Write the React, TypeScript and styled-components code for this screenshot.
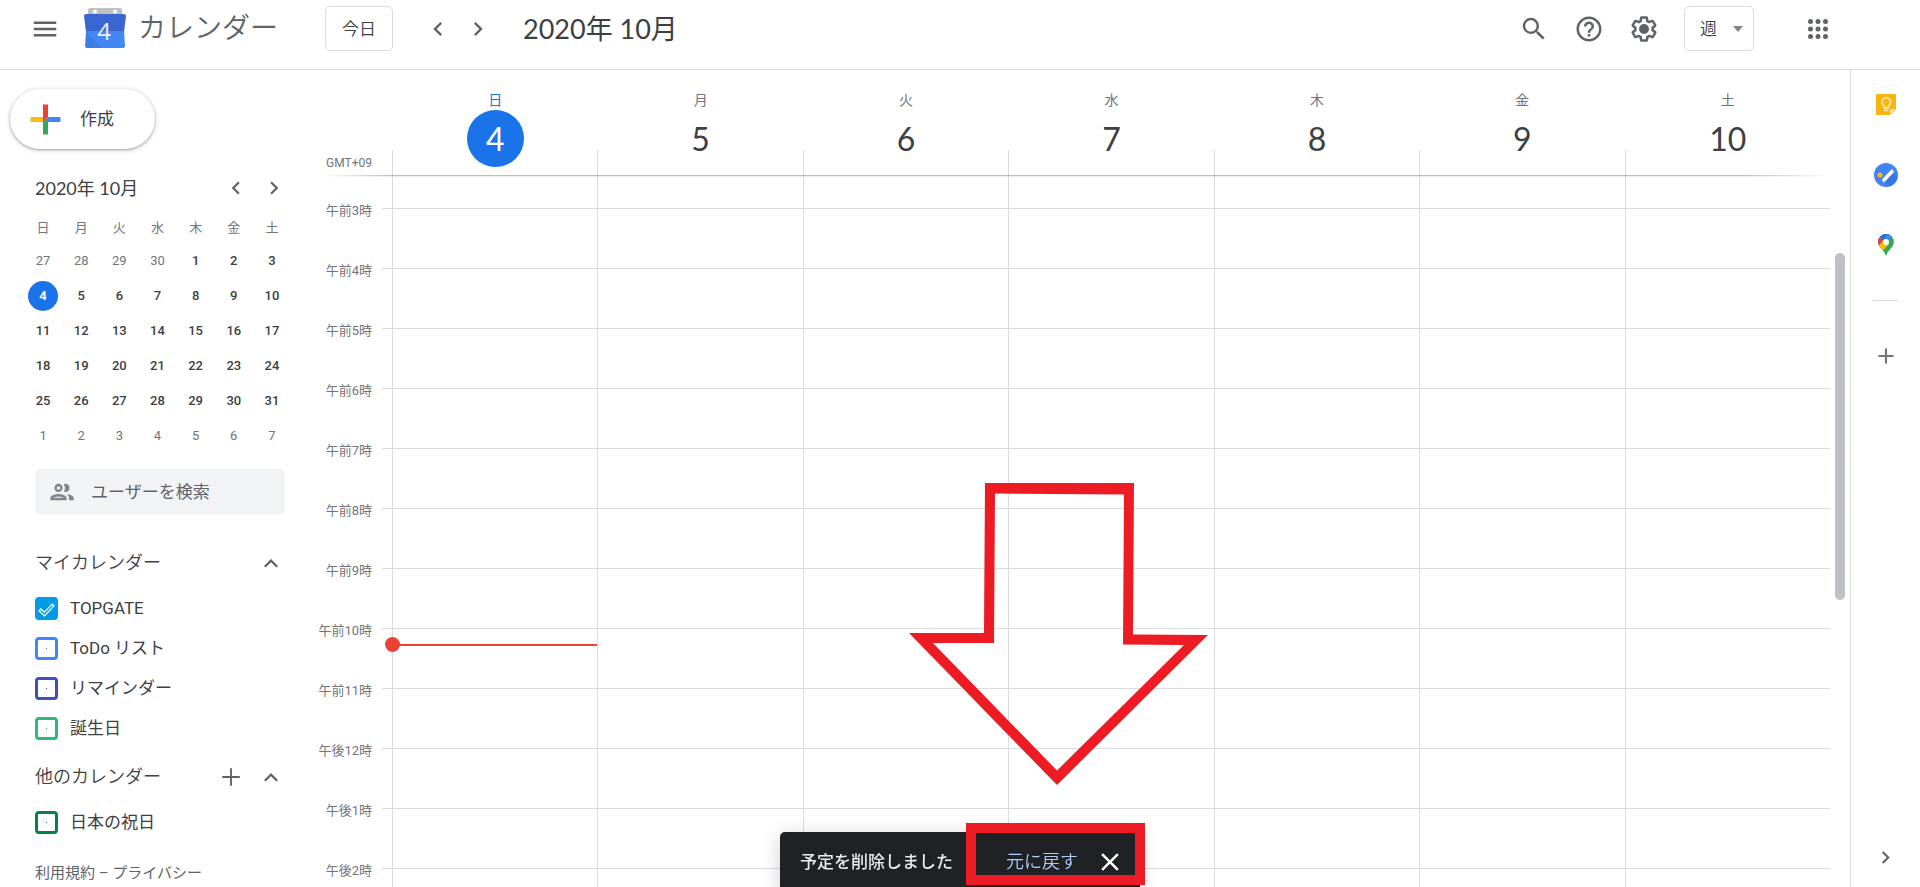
import React from "react";
import styled, { createGlobalStyle, css } from "styled-components";

const SANS = `Roboto, "Noto Sans CJK JP", sans-serif`;
const DISPLAY = `Lato, "Noto Sans CJK JP", sans-serif`;

const ink = "#3c4043";
const muted = "#70757a";
const iconGray = "#5f6368";
const line = "#dadce0";
const blue = "#1a73e8";
const markRed = "#ed1c24";

const GlobalStyle = createGlobalStyle`
  * { box-sizing: border-box; }
  body {
    margin: 0;
    background: #fff;
    color: ${ink};
    font-family: ${SANS};
    line-height: 20px;
    overflow: hidden;
  }
  button, input, select { font: inherit; color: inherit; }
  button { background: none; border: 0; padding: 0; cursor: pointer; }
  svg { display: block; }
`;

const Page = styled.div`
  display: flex;
  flex-direction: column;
  height: 100vh;
`;

/* ---------- Top bar ---------- */

const TopBar = styled.header`
  display: flex;
  flex: none;
  align-items: flex-start;
  height: 70px;
  padding: 6px 82px 0 0;
  border-bottom: 1px solid ${line};
`;

const Brand = styled.div`
  display: flex;
  align-items: center;
  width: 325px;
  height: 45px;
  padding-left: 25px;
`;

const LogoMark = styled.span`
  flex: none;
  margin: 0 11px 0 18px;
`;

const AppName = styled.span`
  font-size: 28px;
  font-weight: 350;
  line-height: 40px;
  color: ${iconGray};
  white-space: nowrap;
`;

const IconButton = styled.button<{ $size?: number }>`
  display: flex;
  align-items: center;
  justify-content: center;
  flex: none;
  width: ${(p) => p.$size ?? 40}px;
  height: ${(p) => p.$size ?? 40}px;
  color: ${iconGray};
`;

const outlined = css`
  height: 45px;
  border: 1px solid ${line};
  border-radius: 5px;
  background: #fff;
  font-size: 17px;
  font-weight: 350;
`;

const TodayButton = styled.button`
  ${outlined}
  width: 68px;
`;

const PagerGroup = styled.div`
  display: flex;
  align-items: center;
  height: 45px;
  margin: 0 25px;
`;

const MonthTitle = styled.h1`
  margin: 0;
  font-family: ${DISPLAY};
  font-size: 27px;
  font-weight: 400;
  line-height: 45px;
  white-space: nowrap;
`;

const Tools = styled.div`
  display: flex;
  align-items: center;
  gap: 15px;
  height: 45px;
  margin-left: auto;
`;

const ViewPicker = styled.label`
  position: relative;
  display: block;
  margin: 0 29px 0 5px;
`;

const ViewSelect = styled.select`
  ${outlined}
  display: block;
  appearance: none;
  width: 70px;
  padding: 0 0 0 15px;
`;

const SelectArrow = styled.svg`
  position: absolute;
  right: 11px;
  top: 20px;
  pointer-events: none;
`;

/* ---------- Sidebar ---------- */

const Columns = styled.div`
  display: flex;
  flex: 1;
  min-height: 0;
`;

const Sidebar = styled.aside`
  flex: none;
  width: 316px;
  padding-top: 19px;
`;

const CreateButton = styled.button`
  display: flex;
  align-items: center;
  gap: 12px;
  width: 145px;
  height: 60px;
  margin-left: 10px;
  padding-left: 13px;
  border-radius: 30px;
  font-size: 17px;
  box-shadow: 0 1px 2px rgba(60, 64, 67, 0.35), 0 1px 4px 1px rgba(60, 64, 67, 0.18);
`;

const MiniHead = styled.div`
  display: flex;
  align-items: center;
  height: 30px;
  margin: 24px 23px 10px 35px;
`;

const MiniTitle = styled.h2`
  flex: 1;
  margin: 0;
  font-family: ${DISPLAY};
  font-size: 18px;
  font-weight: 400;
  white-space: nowrap;
`;

const MiniTable = styled.table`
  width: 267px;
  margin-left: 24px;
  border-collapse: collapse;
  table-layout: fixed;
  font-size: 13px;
  text-align: center;
`;

const MiniWeekday = styled.th`
  height: 30px;
  padding: 0;
  font-weight: 400;
  color: ${muted};
`;

const MiniCell = styled.td`
  height: 35px;
  padding: 0;
`;

const MiniDay = styled.button<{ $outside?: boolean; $today?: boolean }>`
  width: 30px;
  height: 30px;
  border-radius: 50%;
  font-weight: ${(p) => (p.$today ? 700 : p.$outside ? 400 : 500)};
  color: ${(p) => (p.$today ? "#fff" : p.$outside ? muted : ink)};
  background: ${(p) => (p.$today ? blue : "transparent")};
`;

const PeopleSearch = styled.label`
  display: flex;
  align-items: center;
  gap: 15px;
  width: 250px;
  height: 45px;
  margin: 16px 0 29px 35px;
  padding-left: 13px;
  border-radius: 5px;
  background: #f1f3f4;
  color: #80868b;
`;

const PeopleInput = styled.input`
  flex: 1;
  min-width: 0;
  padding: 0;
  border: 0;
  outline: 0;
  background: none;
  font-size: 17px;
  color: ${ink};
  &::placeholder {
    color: ${iconGray};
    opacity: 1;
  }
`;

const SectionHead = styled.div`
  display: flex;
  align-items: center;
  height: 40px;
  margin: 0 25px 5px 35px;
`;

const SectionTitle = styled.h2`
  flex: 1;
  margin: 0;
  font-size: 18px;
  font-weight: 350;
`;

const CalendarList = styled.ul`
  margin: 0 0 9px;
  padding: 0 0 0 35px;
  list-style: none;
`;

const CalendarItem = styled.label`
  display: flex;
  align-items: center;
  gap: 12px;
  height: 40px;
  font-size: 17px;
`;

const TickWrap = styled.span`
  display: grid;
  place-items: center;
  > * { grid-area: 1 / 1; }
  svg { pointer-events: none; }
`;

const TickBox = styled.input<{ $color: string }>`
  appearance: none;
  width: 23px;
  height: 23px;
  margin: 0;
  border: 3px solid ${(p) => p.$color};
  border-radius: 4px;
  background: linear-gradient(${(p) => p.$color}, ${(p) => p.$color}) center / 1px 1px no-repeat;
  &:checked { background: ${(p) => p.$color}; }
`;

const FootLinks = styled.footer`
  margin: 21px 0 0 35px;
  font-size: 15px;
  color: ${iconGray};
`;

const FootLink = styled.a`
  color: inherit;
  text-decoration: none;
`;

/* ---------- Week view ---------- */

const Week = styled.main`
  display: flex;
  flex-direction: column;
  flex: 1;
  min-width: 0;
`;

const DayHeads = styled.div`
  position: relative;
  display: grid;
  grid-template-columns: 76px repeat(7, 1fr);
  flex: none;
  height: 106px;
  margin-right: 20px;
  &::after {
    content: "";
    position: absolute;
    left: 6px;
    right: 0;
    bottom: -1px;
    height: 2px;
    background: linear-gradient(rgba(0, 0, 0, 0.26) 50%, rgba(0, 0, 0, 0.07) 50%);
    mask-image: linear-gradient(90deg, transparent, #000 70px, #000 calc(100% - 90px), transparent);
  }
`;

const Zone = styled.div`
  align-self: end;
  padding: 0 20px 3px 0;
  font-size: 12px;
  text-align: right;
  color: ${muted};
`;

const DayHead = styled.div<{ $today?: boolean }>`
  display: flex;
  flex-direction: column;
  align-items: center;
  padding: 20px 0 0 1px;
  font-size: 14px;
  color: ${(p) => (p.$today ? blue : muted)};
  background: linear-gradient(${line}, ${line}) left bottom / 1px 26px no-repeat;
`;

const DayNumber = styled.button<{ $today?: boolean }>`
  width: 57px;
  height: 57px;
  border-radius: 50%;
  font-family: ${DISPLAY};
  font-size: 32px;
  line-height: 57px;
  color: ${(p) => (p.$today ? "#fff" : ink)};
  background: ${(p) => (p.$today ? blue : "transparent")};
`;

const Scroller = styled.div`
  display: flex;
  flex: 1;
  min-height: 0;
  overflow: hidden;
`;

const Hours = styled.div`
  position: relative;
  flex: 1;
  min-width: 0;
`;

const HourRow = styled.div<{ $partial?: boolean }>`
  display: grid;
  grid-template-columns: 66px 10px repeat(7, 1fr);
  height: ${(p) => (p.$partial ? 32 : 60)}px;
  > * + * { border-top: ${(p) => (p.$partial ? "0" : `1px solid ${line}`)}; }
`;

const HourLabel = styled.span`
  margin-top: -7px;
  padding-right: 10px;
  font-size: 13px;
  text-align: right;
  color: ${muted};
`;

const Slot = styled.div`
  border-left: 1px solid ${line};
`;

const Overlay = styled.div`
  position: absolute;
  inset: 0 0 0 76px;
  pointer-events: none;
`;

const NowLine = styled.div`
  position: absolute;
  top: 468px;
  left: 0;
  width: calc(100% / 7);
  height: 2px;
  background: #ea4335;
  &::before {
    content: "";
    position: absolute;
    left: -7px;
    top: -7px;
    width: 15px;
    height: 15px;
    border-radius: 50%;
    background: #ea4335;
  }
`;

const Arrow = styled.svg`
  position: absolute;
  left: calc(36% - 1px);
  top: 307px;
`;

const Track = styled.div`
  flex: none;
  width: 10px;
  margin: 77px 5px 0;
`;

const Thumb = styled.div`
  height: 347px;
  border-radius: 5px;
  background: #bdc1c6;
`;

/* ---------- Side panel ---------- */

const Rail = styled.nav`
  display: flex;
  flex-direction: column;
  align-items: center;
  flex: none;
  width: 70px;
  padding-bottom: 10px;
  border-left: 1px solid ${line};
`;

const RailButton = styled.button`
  display: flex;
  align-items: center;
  justify-content: center;
  width: 69px;
  height: 70px;
  color: #757575;
`;

const RailRule = styled.hr`
  width: 25px;
  height: 1px;
  margin: 20px 0;
  border: 0;
  background: ${line};
`;

const RailToggle = styled(IconButton)`
  margin-top: auto;
`;

/* ---------- Snackbar ---------- */

const ToastLayer = styled.div`
  position: fixed;
  left: 0;
  right: 0;
  bottom: -5px;
  display: flex;
  justify-content: center;
  pointer-events: none;
`;

const Toast = styled.div`
  position: relative;
  display: flex;
  align-items: center;
  width: 360px;
  height: 60px;
  padding: 0 15px 0 20px;
  border-radius: 5px;
  background: #202124;
  box-shadow: 0 4px 20px rgba(0, 0, 0, 0.2);
  pointer-events: auto;
`;

const ToastText = styled.span`
  flex: 1;
  font-size: 17px;
  font-weight: 500;
  color: #e8eaed;
  white-space: nowrap;
`;

const UndoButton = styled.button`
  margin-right: 17px;
  font-size: 18px;
  font-weight: 350;
  color: #aecbfa;
`;

const CloseButton = styled(IconButton)`
  color: #fff;
`;

const Highlight = styled.div`
  position: absolute;
  top: -9px;
  right: -5px;
  width: 179px;
  height: 62px;
  border: 10px solid ${markRed};
  pointer-events: none;
`;

/* ---------- Icons ---------- */

const Glyph = ({ d, size = 30 }: { d: string; size?: number }) => (
  <svg width={size} height={size} viewBox="0 0 24 24" fill="currentColor" aria-hidden="true">
    <path d={d} />
  </svg>
);

const paths = {
  menu: "M3 18h18v-2H3v2zm0-5h18v-2H3v2zm0-7v2h18V6H3z",
  left: "M15.41 7.41L14 6l-6 6 6 6 1.41-1.41L10.83 12z",
  right: "M10 6L8.59 7.41 13.17 12l-4.58 4.59L10 18l6-6z",
  up: "M12 8.500l-6 6 1.410 1.410L12 11.330l4.590 4.580L18 14.500z",
  search:
    "M15.5 14h-.79l-.28-.27A6.47 6.47 0 0 0 16 9.5 6.5 6.5 0 1 0 9.5 16c1.61 0 3.09-.59 4.23-1.57l.27.28v.79l5 4.99L20.49 19l-4.99-5zm-6 0C7.01 14 5 11.99 5 9.5S7.01 5 9.5 5 14 7.01 14 9.5 11.99 14 9.5 14z",
  help:
    "M11 18h2v-2h-2v2zm1-16C6.48 2 2 6.48 2 12s4.48 10 10 10 10-4.48 10-10S17.52 2 12 2zm0 18c-4.41 0-8-3.59-8-8s3.59-8 8-8 8 3.59 8 8-3.59 8-8 8zm0-14c-2.21 0-4 1.79-4 4h2c0-1.1.9-2 2-2s2 .9 2 2c0 2-3 1.75-3 5h2c0-2.25 3-2.5 3-5 0-2.21-1.79-4-4-4z",
  gear:
    "M13.85 22.25h-3.7c-.74 0-1.36-.54-1.45-1.27l-.27-1.89c-.27-.14-.53-.29-.79-.46l-1.8.72c-.7.26-1.47-.03-1.81-.65L2.2 15.53c-.35-.66-.2-1.44.36-1.88l1.53-1.19c-.01-.15-.02-.3-.02-.46 0-.15.01-.31.02-.46l-1.52-1.19c-.59-.45-.74-1.26-.37-1.88l1.85-3.19c.34-.62 1.11-.9 1.79-.63l1.81.73c.26-.17.52-.32.78-.46l.27-1.91c.09-.7.71-1.25 1.44-1.25h3.7c.74 0 1.36.54 1.45 1.27l.27 1.89c.27.14.53.29.79.46l1.8-.72c.71-.26 1.48.03 1.82.65l1.84 3.18c.36.66.2 1.44-.36 1.88l-1.52 1.19c.01.15.02.3.02.46s-.01.31-.02.46l1.52 1.19c.56.45.72 1.23.37 1.86l-1.86 3.22c-.34.62-1.11.9-1.8.63l-1.8-.72c-.26.17-.52.32-.78.46l-.27 1.91c-.1.68-.72 1.22-1.46 1.22zm-3.23-2h2.76l.37-2.55.53-.22c.44-.18.88-.44 1.34-.78l.45-.34 2.38.96 1.38-2.4-2.03-1.58.07-.56c.03-.26.06-.51.06-.78s-.03-.53-.06-.78l-.07-.56 2.03-1.58-1.39-2.4-2.39.96-.45-.35c-.42-.32-.87-.58-1.33-.77l-.52-.22-.37-2.55h-2.76l-.37 2.55-.53.21c-.44.19-.88.44-1.34.79l-.45.33-2.38-.95-1.39 2.39 2.03 1.58-.07.56a7 7 0 0 0-.06.79c0 .26.02.53.06.78l.07.56-2.03 1.58 1.38 2.4 2.39-.96.45.35c.43.33.86.58 1.33.77l.53.22.38 2.55zM12 8a4 4 0 1 0 0 8 4 4 0 0 0 0-8z",
  apps:
    "M6 8a2 2 0 1 0 0-4 2 2 0 0 0 0 4zm6 12a2 2 0 1 0 0-4 2 2 0 0 0 0 4zm-6 0a2 2 0 1 0 0-4 2 2 0 0 0 0 4zm0-6a2 2 0 1 0 0-4 2 2 0 0 0 0 4zm6 0a2 2 0 1 0 0-4 2 2 0 0 0 0 4zm4-8a2 2 0 1 0 4 0 2 2 0 0 0-4 0zm-4 2a2 2 0 1 0 0-4 2 2 0 0 0 0 4zm6 6a2 2 0 1 0 0-4 2 2 0 0 0 0 4zm0 6a2 2 0 1 0 0-4 2 2 0 0 0 0 4z",
  people:
    "M9 13.75c-2.34 0-7 1.17-7 3.5V19h14v-1.75c0-2.33-4.66-3.5-7-3.5zM4.34 17c.84-.58 2.87-1.25 4.66-1.25s3.82.67 4.66 1.25H4.34zM9 12c1.93 0 3.5-1.57 3.5-3.5S10.93 5 9 5 5.5 6.57 5.5 8.5 7.07 12 9 12zm0-5c.83 0 1.5.67 1.5 1.5S9.83 10 9 10s-1.5-.67-1.5-1.5S8.17 7 9 7zm7.04 6.81c1.16.84 1.96 1.96 1.96 3.44V19h4v-1.75c0-2.02-3.5-3.17-5.96-3.44zM15 12c1.93 0 3.5-1.57 3.5-3.5S16.93 5 15 5c-.54 0-1.04.13-1.5.35.63.89 1 1.98 1 3.15s-.37 2.26-1 3.15c.46.22.96.35 1.5.35z",
  plus: "M19 12.75h-6.25V19h-1.5v-6.25H5v-1.5h6.25V5h1.5v6.25H19z",
  close:
    "M19 6.41L17.59 5 12 10.59 6.41 5 5 6.41 10.59 12 5 17.59 6.41 19 12 13.41 17.59 19 19 17.59 13.41 12z",
};

const Logo = () => (
  <svg width="44" height="44" viewBox="0 0 44 44" aria-hidden="true">
    <path d="M5 3a2 2 0 0 1 2-2h30a2 2 0 0 1 2 2v6H5z" fill="#c0c0c0" />
    <circle cx="12" cy="4.500" r="2" fill="#fff" />
    <circle cx="32" cy="4.500" r="2" fill="#fff" />
    <path d="M3 7h38q2 0 2 2l-2 16H3L1 9q0-2 2-2z" fill="#3966d0" />
    <path d="M3 24h38l1 15q0 2-2 2H4q-2 0-2-2z" fill="#4486f4" />
    <path d="M3 27v12q0 2 2 2h14L3 26z" fill="#3d7be6" />
    <text x="21" y="33" textAnchor="middle" fontFamily="Open Sans" fontSize="24" fill="#eceff7">
      4
    </text>
  </svg>
);

const CreatePlus = () => (
  <svg width="45" height="45" viewBox="0 0 36 36" aria-hidden="true">
    <path fill="#34a853" d="M16 16v14h4V20z" />
    <path fill="#4285f4" d="M30 16H20l-4 4h14z" />
    <path fill="#fbbc05" d="M6 16v4h10l4-4z" />
    <path fill="#ea4335" d="M20 16V6h-4v14z" />
  </svg>
);

const KeepIcon = () => (
  <svg width="22" height="22" viewBox="0 0 22 22" aria-hidden="true">
    <path d="M2 0h18q1 0 1 1v14l-6 6H2q-1 0-1-1V1q0-1 1-1z" fill="#f6b60b" />
    <path d="M15 21v-5q0-1 1-1h5z" fill="#fbdc83" />
    <path
      d="M9 14v-2.200a4.300 4.300 0 1 1 4.400 0V14zM9 16.500h4.400"
      fill="none"
      stroke="#fdeab8"
      strokeWidth="1.500"
    />
  </svg>
);

const TasksIcon = () => (
  <svg width="24" height="24" viewBox="0 0 24 24" aria-hidden="true">
    <circle cx="12" cy="12" r="12" fill="#4484f2" />
    <path d="M10 18l9-10 4.500 7A12 12 0 0 1 15 23.500z" fill="#3a76e0" />
    <circle cx="6" cy="12" r="2.500" fill="#f6bb18" />
    <path d="M10 17l8-8.500" stroke="#fff" strokeWidth="3.600" strokeLinecap="round" />
  </svg>
);

const MapsIcon = () => (
  <svg width="16" height="22" viewBox="0 0 16 22" aria-hidden="true">
    <clipPath id="pin">
      <path d="M8 0a7.800 7.800 0 0 0-7.800 7.800c0 3 1.300 4.700 3.200 7C5.500 17.300 7 18.500 7.400 21c.1.700 1.100.7 1.200 0 .4-2.500 1.900-3.700 4-6.200 1.900-2.300 3.200-4 3.200-7A7.800 7.800 0 0 0 8 0z" />
    </clipPath>
    <g clipPath="url(#pin)">
      <path d="M0 0h16v22H0z" fill="#34a853" />
      <path d="M0 14L13 -1 0-1z" fill="#1a73e8" />
      <path d="M2 3l6 5-8 9V4z" fill="#ea4335" />
      <path d="M0 12.500L6 6l5 4-7.500 8z" fill="#fbbc04" />
      <path d="M10-1l4 3.500L9 8 6 5z" fill="#4285f4" />
    </g>
    <circle cx="8" cy="8" r="3" fill="#fff" />
  </svg>
);

const DoneMark = () => (
  <svg width="23" height="23" viewBox="0 0 23 23" aria-hidden="true">
    <path d="M4.500 12.500l5 4.500 9-9.500" fill="none" stroke="#fff" strokeWidth="3.800" />
    <path d="M5.500 13.400l4 3.600 8-8.500" fill="none" stroke="#039be5" strokeWidth="1.400" />
  </svg>
);

/* ---------- Data ---------- */

const weekdays = ["日", "月", "火", "水", "木", "金", "土"];
const firstCells = [27, 28, 29, 30];
const monthCells = [
  ...firstCells.map((n) => ({ n, outside: true })),
  ...Array.from({ length: 31 }, (_, i) => ({ n: i + 1, outside: false })),
  ...Array.from({ length: 7 }, (_, i) => ({ n: i + 1, outside: true })),
];
const weeks = Array.from({ length: 6 }, (_, w) => monthCells.slice(w * 7, w * 7 + 7));

const hours = [
  "午前3時", "午前4時", "午前5時", "午前6時", "午前7時", "午前8時",
  "午前9時", "午前10時", "午前11時", "午後12時", "午後1時", "午後2時",
];

const myCalendars = [
  { name: "TOPGATE", color: "#039be5", on: true },
  { name: "ToDo リスト", color: "#4285f4", on: false },
  { name: "リマインダー", color: "#3f51b5", on: false },
  { name: "誕生日", color: "#33b679", on: false },
];
const otherCalendars = [{ name: "日本の祝日", color: "#0b8043", on: false }];

/* ---------- Parts ---------- */

type Cal = { name: string; color: string; on: boolean };

const Calendars = ({ items }: { items: Cal[] }) => (
  <CalendarList>
    {items.map((c) => (
      <li key={c.name}>
        <CalendarItem>
          <TickWrap>
            <TickBox type="checkbox" $color={c.color} defaultChecked={c.on} />
            {c.on && <DoneMark />}
          </TickWrap>
          {c.name}
        </CalendarItem>
      </li>
    ))}
  </CalendarList>
);

const Slots = () => (
  <>
    {weekdays.map((d) => (
      <Slot key={d} />
    ))}
  </>
);

export default function App() {
  return (
    <Page>
      <GlobalStyle />
      <TopBar>
        <Brand>
          <IconButton aria-label="メインメニュー">
            <Glyph d={paths.menu} />
          </IconButton>
          <LogoMark>
            <Logo />
          </LogoMark>
          <AppName>カレンダー</AppName>
        </Brand>
        <TodayButton>今日</TodayButton>
        <PagerGroup>
          <IconButton aria-label="前の週">
            <Glyph d={paths.left} size={28} />
          </IconButton>
          <IconButton aria-label="次の週">
            <Glyph d={paths.right} size={28} />
          </IconButton>
        </PagerGroup>
        <MonthTitle>2020年 10月</MonthTitle>
        <Tools>
          <IconButton aria-label="検索">
            <Glyph d={paths.search} />
          </IconButton>
          <IconButton aria-label="サポート">
            <Glyph d={paths.help} />
          </IconButton>
          <IconButton aria-label="設定">
            <Glyph d={paths.gear} />
          </IconButton>
          <ViewPicker>
            <ViewSelect aria-label="表示" defaultValue="week">
              <option value="week">週</option>
            </ViewSelect>
            <SelectArrow width="10" height="6" viewBox="0 0 10 6">
              <path d="M0 0h10L5 6z" fill="#80868b" />
            </SelectArrow>
          </ViewPicker>
          <IconButton aria-label="アプリ">
            <Glyph d={paths.apps} />
          </IconButton>
        </Tools>
      </TopBar>

      <Columns>
        <Sidebar>
          <CreateButton>
            <CreatePlus />
            作成
          </CreateButton>

          <MiniHead>
            <MiniTitle>2020年 10月</MiniTitle>
            <IconButton aria-label="前の月" $size={38}>
              <Glyph d={paths.left} size={26} />
            </IconButton>
            <IconButton aria-label="次の月" $size={38}>
              <Glyph d={paths.right} size={26} />
            </IconButton>
          </MiniHead>
          <MiniTable>
            <thead>
              <tr>
                {weekdays.map((d) => (
                  <MiniWeekday key={d}>{d}</MiniWeekday>
                ))}
              </tr>
            </thead>
            <tbody>
              {weeks.map((week, w) => (
                <tr key={w}>
                  {week.map(({ n, outside }) => (
                    <MiniCell key={n}>
                      <MiniDay $outside={outside} $today={!outside && n === 4}>
                        {n}
                      </MiniDay>
                    </MiniCell>
                  ))}
                </tr>
              ))}
            </tbody>
          </MiniTable>

          <PeopleSearch>
            <Glyph d={paths.people} size={28} />
            <PeopleInput type="text" placeholder="ユーザーを検索" aria-label="ユーザーを検索" />
          </PeopleSearch>

          <SectionHead>
            <SectionTitle>マイカレンダー</SectionTitle>
            <IconButton aria-label="マイカレンダーを折りたたむ">
              <Glyph d={paths.up} size={28} />
            </IconButton>
          </SectionHead>
          <Calendars items={myCalendars} />

          <SectionHead>
            <SectionTitle>他のカレンダー</SectionTitle>
            <IconButton aria-label="他のカレンダーを追加">
              <Glyph d={paths.plus} />
            </IconButton>
            <IconButton aria-label="他のカレンダーを折りたたむ">
              <Glyph d={paths.up} size={28} />
            </IconButton>
          </SectionHead>
          <Calendars items={otherCalendars} />

          <FootLinks>
            <FootLink href="#terms">利用規約</FootLink> – <FootLink href="#privacy">プライバシー</FootLink>
          </FootLinks>
        </Sidebar>

        <Week>
          <DayHeads>
            <Zone>GMT+09</Zone>
            {weekdays.map((d, i) => (
              <DayHead key={d} $today={i === 0}>
                {d}
                <DayNumber $today={i === 0}>{i + 4}</DayNumber>
              </DayHead>
            ))}
          </DayHeads>
          <Scroller>
            <Hours>
              <HourRow $partial>
                <span />
                <span />
                <Slots />
              </HourRow>
              {hours.map((h) => (
                <HourRow key={h}>
                  <HourLabel>{h}</HourLabel>
                  <span />
                  <Slots />
                </HourRow>
              ))}
              <Overlay>
                <NowLine />
                <Arrow width="300" height="302" viewBox="0 0 300 302" aria-hidden="true">
                  <path
                    fill={markRed}
                    fillRule="evenodd"
                    d="M76 0H225L224 151.500 299 152 148 302 0 150H75zM86 10.500L85 160H24L148 287.500 275 162 214 161.500 215 11.500z"
                  />
                </Arrow>
              </Overlay>
            </Hours>
            <Track>
              <Thumb />
            </Track>
          </Scroller>
        </Week>

        <Rail>
          <RailButton aria-label="Keep">
            <KeepIcon />
          </RailButton>
          <RailButton aria-label="ToDo リスト">
            <TasksIcon />
          </RailButton>
          <RailButton aria-label="マップ">
            <MapsIcon />
          </RailButton>
          <RailRule />
          <RailButton aria-label="アドオンを取得">
            <Glyph d="M19 13h-6v6h-2v-6H5v-2h6V5h2v6h6z" size={26} />
          </RailButton>
          <RailToggle aria-label="サイドパネルを非表示">
            <Glyph d={paths.right} size={25} />
          </RailToggle>
        </Rail>
      </Columns>

      <ToastLayer>
        <Toast role="status">
          <ToastText>予定を削除しました</ToastText>
          <UndoButton>元に戻す</UndoButton>
          <CloseButton aria-label="閉じる" $size={30}>
            <Glyph d={paths.close} />
          </CloseButton>
          <Highlight />
        </Toast>
      </ToastLayer>
    </Page>
  );
}
